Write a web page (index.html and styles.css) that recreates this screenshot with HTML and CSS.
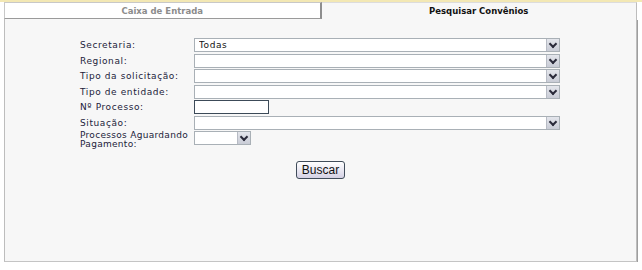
FILE: index.html
```html
<!DOCTYPE html>
<html lang="pt-BR">
<head>
  <meta charset="UTF-8" />
  <title>Pesquisar Convênios</title>
  <link rel="stylesheet" href="styles.css">
</head>
<body>
  <div class="top-line"></div>

  <div class="tabs">
    <a class="tab" href="#caixa">Caixa de Entrada</a>
    <a class="tab active" href="#pesquisar">Pesquisar Convênios</a>
  </div>

  <main class="panel">
    <form class="search-form">
      <label for="secretaria">Secretaria:</label>
      <div class="combo wide">
        <select id="secretaria"><option>Todas</option></select>
        <span class="arrow"></span>
      </div>

      <label for="regional">Regional:</label>
      <div class="combo wide">
        <select id="regional"><option></option></select>
        <span class="arrow"></span>
      </div>

      <label for="tipoSolicitacao">Tipo da solicitação:</label>
      <div class="combo wide">
        <select id="tipoSolicitacao"><option></option></select>
        <span class="arrow"></span>
      </div>

      <label for="tipoEntidade">Tipo de entidade:</label>
      <div class="combo wide">
        <select id="tipoEntidade"><option></option></select>
        <span class="arrow"></span>
      </div>

      <label for="processo">Nº Processo:</label>
      <div><input id="processo" class="text-input" type="text" /></div>

      <label for="situacao">Situação:</label>
      <div class="combo wide">
        <select id="situacao"><option></option></select>
        <span class="arrow"></span>
      </div>

      <label for="aguardando" class="two-lines">Processos Aguardando<br>Pagamento:</label>
      <div class="combo small">
        <select id="aguardando"><option></option></select>
        <span class="arrow"></span>
      </div>
    </form>

    <div class="actions">
      <button class="btn" type="button">Buscar</button>
    </div>
  </main>
</body>
</html>
```

FILE: styles.css
```css
body {
  margin: 0;
  background: #fff;
  font-family: "DejaVu Sans", Verdana, sans-serif;
  font-size: 9px;
  color: #222;
}
.top-line {
  height: 2px;
  background: #f3e8b4;
}
.tabs {
  display: flex;
  margin: 0 5px 0 4px;
  height: 17px;
}
.tab {
  flex: 1;
  display: flex;
  align-items: center;
  justify-content: center;
  text-decoration: none;
  font-weight: bold;
  font-size: 8.5px;
  color: #8c8c8c;
  background: #fff;
  border: 1px solid #c8c8c8;
  border-right: 2px solid #8e8e8e;
  border-bottom: 1px solid #9a9a9a;
}
.tab.active {
  color: #111;
  background: #f7f7f7;
  border: none;
  border-top: 1px solid #dcdcdc;
  border-right: 1px solid #bdbdbd;
}
.panel {
  margin: 0 5px 0 4px;
  height: 223px;
  padding-top: 19px;
  background: #f7f7f7;
  border-left: 1px solid #bdbdbd;
  border-right: 1px solid #bdbdbd;
  border-bottom: 1px solid #c4c4c4;
  box-shadow: 1px 1px 0 #9e9e9e;
}
.search-form {
  display: grid;
  grid-template-columns: 114px 366px;
  grid-auto-rows: 14px;
  row-gap: 1.5px;
  padding-left: 75px;
}
.search-form label {
  align-self: center;
  color: #1c1c3a;
  letter-spacing: 0.6px;
  white-space: nowrap;
}
.search-form label.two-lines {
  align-self: start;
  line-height: 9px;
  letter-spacing: 0.3px;
}
.combo {
  position: relative;
  height: 14px;
}
.combo.small {
  width: 57px;
}
.combo select {
  appearance: none;
  -webkit-appearance: none;
  width: 100%;
  height: 14px;
  margin: 0;
  padding: 0 0 0 4px;
  border: 1px solid #a9b0b6;
  border-radius: 0;
  background: #fff;
  font-family: "DejaVu Sans", Verdana, sans-serif;
  font-size: 9px;
  letter-spacing: 0.6px;
  color: #111;
}
.arrow {
  position: absolute;
  top: 1px;
  right: 1px;
  width: 12px;
  height: 12px;
  background: linear-gradient(#e4e6ec, #c9ccd6);
  border-left: 1px solid #b7bbc4;
}
.arrow::after {
  content: "";
  position: absolute;
  left: 3px;
  top: 2px;
  width: 4px;
  height: 4px;
  border-right: 2px solid #2a2a3a;
  border-bottom: 2px solid #2a2a3a;
  transform: rotate(45deg);
}
.text-input {
  box-sizing: border-box;
  width: 75px;
  height: 14px;
  margin: 0;
  padding: 0 2px;
  border: 1px solid #3c4a58;
  background: #fff;
}
.actions {
  display: flex;
  justify-content: center;
  margin-top: 16px;
}
.btn {
  height: 18px;
  padding: 0 5px;
  font-family: "Liberation Sans", Arial, sans-serif;
  font-size: 12px;
  color: #111;
  background: linear-gradient(#ffffff, #e6e4f0 60%, #d4d1e4);
  border: 1px solid #404c5a;
  border-radius: 3px;
  cursor: pointer;
}
```
